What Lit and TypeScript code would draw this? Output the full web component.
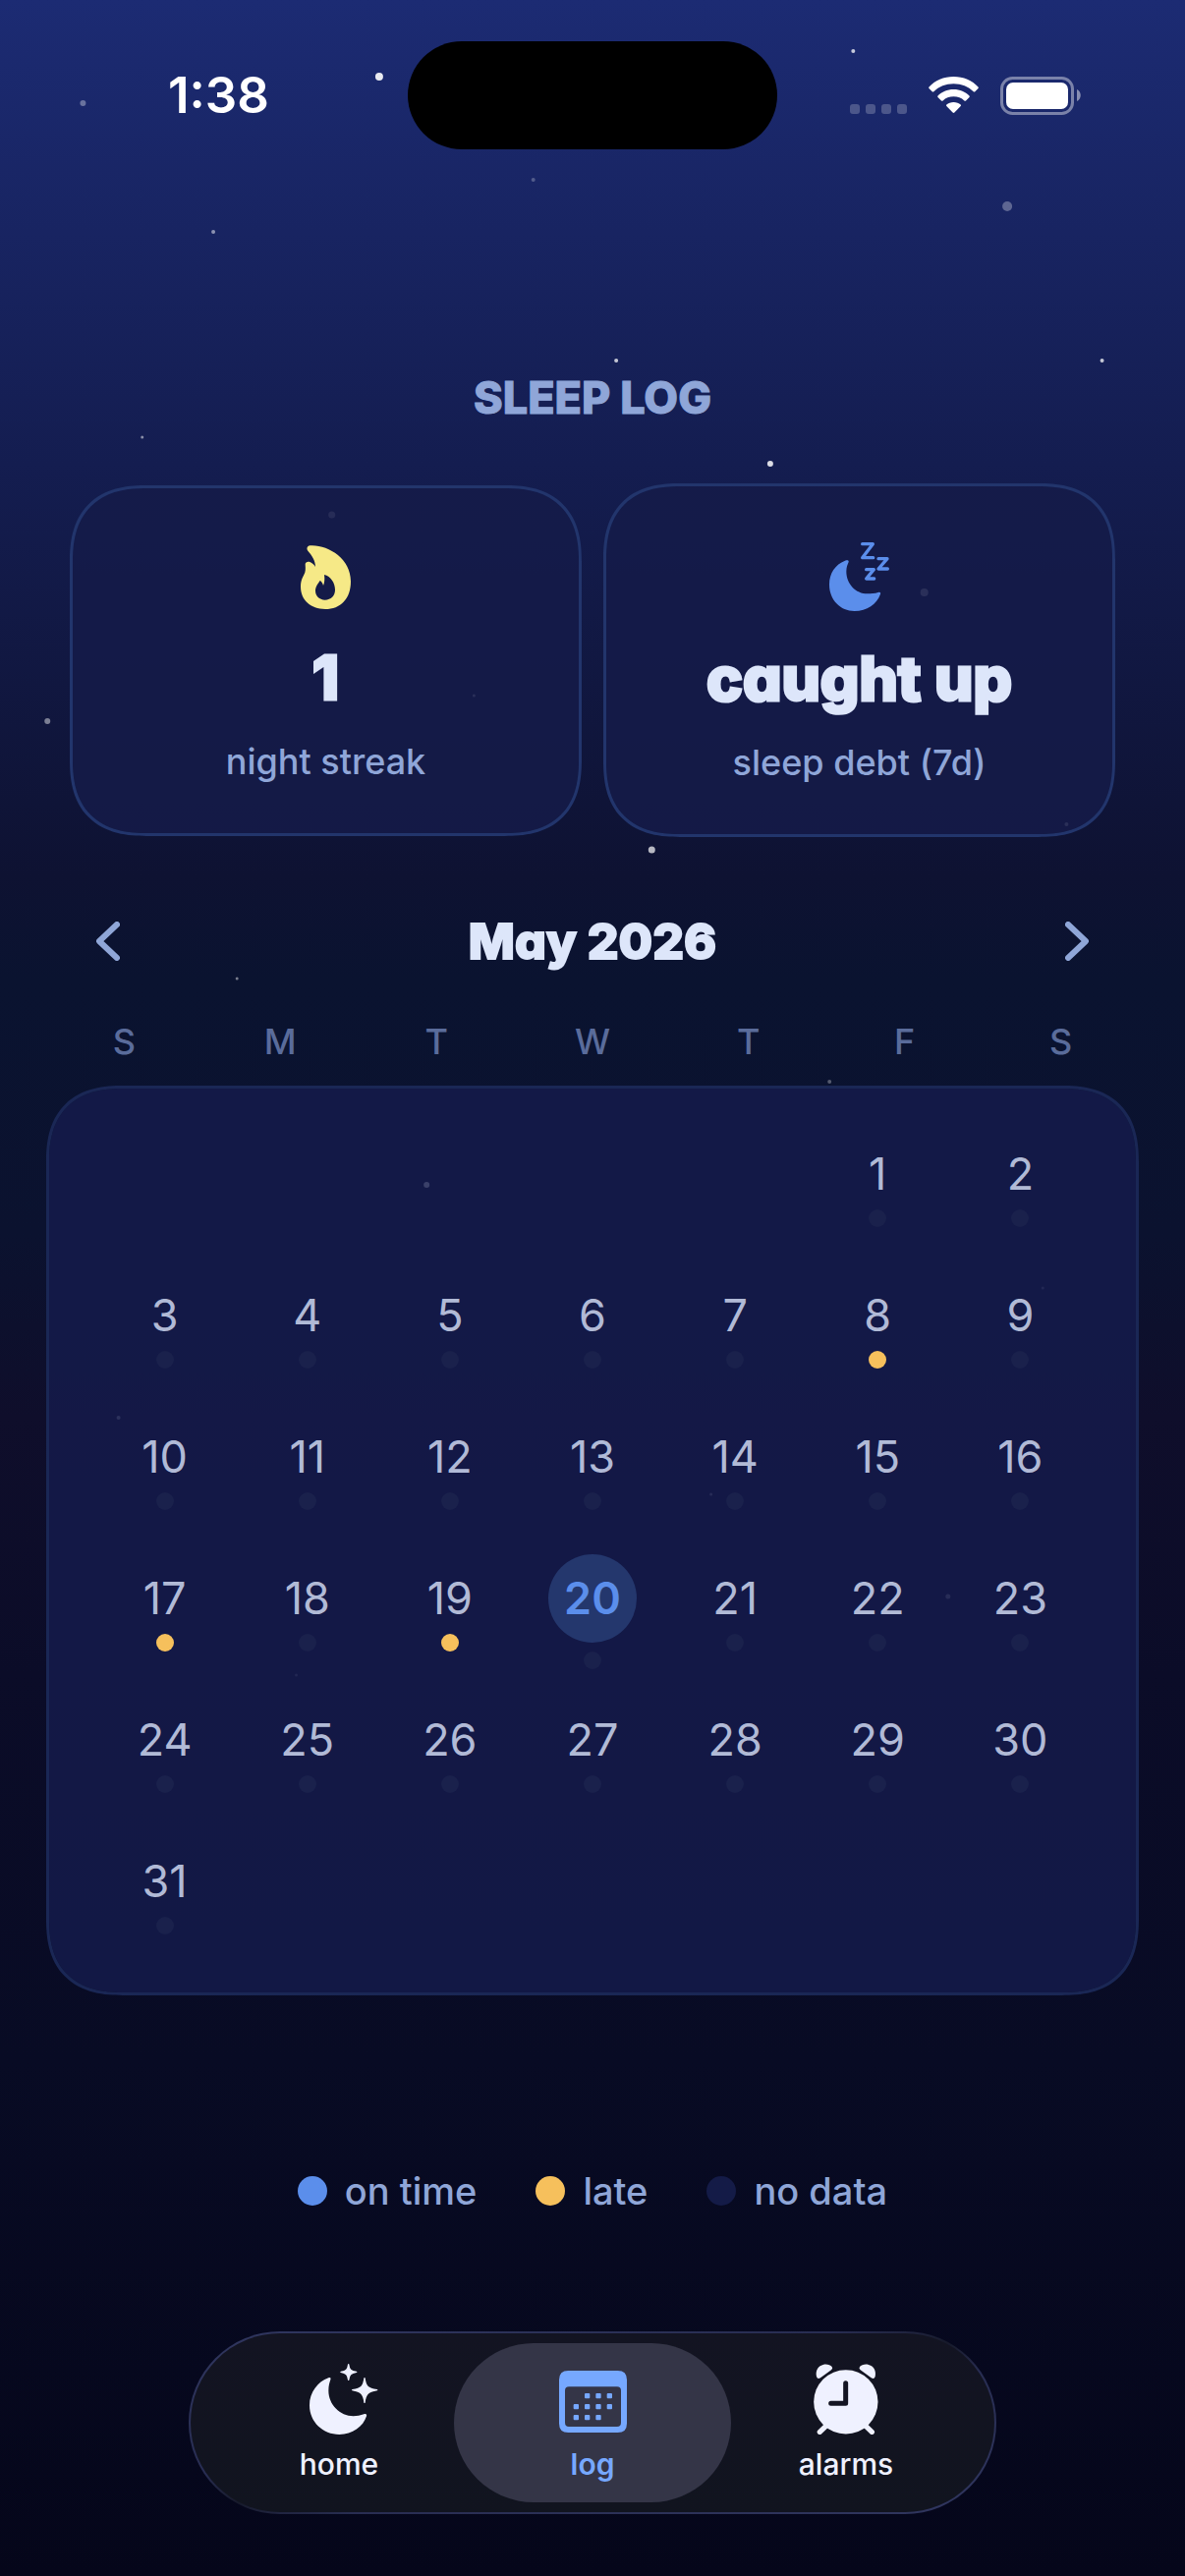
import { LitElement, html, css, svg } from "lit";
import { customElement, property, state } from "lit/decorators.js";
import { classMap } from "lit/directives/class-map.js";

type Status = "late" | "ontime" | "none";

/** x in percent of the width, y in pixels, radius, opacity */
const STARS: [number, number, number, number][] = [
  [7, 105, 3, 0.35],
  [32, 78, 4, 0.9],
  [45, 183, 2, 0.25],
  [18, 236, 2, 0.5],
  [12, 445, 1.5, 0.5],
  [72, 52, 2, 0.75],
  [85, 210, 5, 0.3],
  [52, 367, 2, 0.75],
  [93, 367, 2, 0.75],
  [65, 472, 3, 0.85],
  [28, 524, 3.5, 0.5],
  [40, 708, 1.5, 0.6],
  [4, 734, 3, 0.45],
  [78, 603, 4, 0.6],
  [90, 839, 2, 0.6],
  [55, 865, 3.5, 0.7],
  [20, 996, 1.5, 0.45],
  [36, 1206, 3, 0.8],
  [70, 1101, 2, 0.3],
  [88, 1311, 1.5, 0.3],
  [10, 1443, 2, 0.5],
  [60, 1521, 1.5, 0.4],
  [25, 1705, 1.5, 0.3],
  [80, 1625, 2.5, 0.4],
];

@customElement("star-field")
export class StarField extends LitElement {
  static styles = css`
    :host {
      position: absolute;
      inset: 0;
      pointer-events: none;
    }
    svg {
      width: 100%;
      height: 100%;
      display: block;
    }
  `;

  render() {
    return html`<svg aria-hidden="true">
      ${STARS.map(
        ([x, y, r, o]) =>
          svg`<circle cx="${x}%" cy=${y} r=${r} fill="#fff" fill-opacity=${o} />`
      )}
    </svg>`;
  }
}

@customElement("status-bar")
export class StatusBar extends LitElement {
  static styles = css`
    :host {
      display: grid;
      grid-template-columns: 1fr auto 1fr;
      align-items: center;
      padding-top: 42px;
    }
    .time {
      color: #fff;
      font-size: 51px;
      font-weight: 600;
      line-height: 60px;
      text-align: center;
      padding-left: 30px;
    }
    .island {
      width: 376px;
      height: 110px;
      border-radius: 55px;
      background: #000;
    }
    .icons {
      display: flex;
      align-items: center;
      gap: 22px;
      padding-left: 74px;
    }
    .cell {
      align-self: flex-end;
      display: flex;
      gap: 6px;
      padding-bottom: 1px;
    }
    .cell i {
      width: 10px;
      height: 10px;
      border-radius: 3px;
      background: rgba(255, 255, 255, 0.22);
    }
    svg {
      display: block;
    }
  `;

  render() {
    return html`
      <time class="time">1:38</time>
      <div class="island"></div>
      <div class="icons">
        <span class="cell"><i></i><i></i><i></i><i></i></span>
        <svg width="51" height="38" viewBox="0 0 51 38" fill="#fff" aria-hidden="true">
          <path d="M25.500 0C35.500 0 44.500 4 50.500 10.500Q51.200 11.300 50.500 12L47.300 15.200Q46.500 16 45.700 15.200C40.500 10.300 33.500 7.300 25.500 7.300S10.500 10.300 5.300 15.200Q4.500 16 3.700 15.200L.5 12Q-.2 11.300 .5 10.500C6.500 4 15.500 0 25.500 0Z" />
          <path d="M25.500 13C32 13 37.500 15.500 41.500 19.400Q42.200 20.200 41.500 21L38 24.400Q37.200 25.200 36.400 24.400C33.500 21.800 29.800 20.300 25.500 20.300S17.500 21.800 14.600 24.400Q13.800 25.200 13 24.400L9.500 21Q8.800 20.200 9.500 19.400C13.500 15.500 19 13 25.500 13Z" />
          <path d="M25.500 26C28.400 26 30.800 26.900 32.700 28.500Q33.400 29.200 32.700 30L26.400 36.500Q25.500 37.400 24.600 36.500L18.300 30Q17.600 29.200 18.300 28.500C20.200 26.900 22.600 26 25.500 26Z" />
        </svg>
        <svg width="82" height="39" viewBox="0 0 82 39" aria-hidden="true">
          <rect x="1.500" y="1.500" width="72" height="36" rx="11" fill="none" stroke="#fff" stroke-opacity=".42" stroke-width="3" />
          <rect x="6" y="6" width="63" height="27" rx="7" fill="#fff" />
          <path d="M78 13C83 15 83 23 78 25Z" fill="#fff" fill-opacity=".48" />
        </svg>
      </div>
    `;
  }
}

@customElement("stat-card")
export class StatCard extends LitElement {
  @property() value = "";
  @property() label = "";

  static styles = css`
    :host {
      flex: 1;
      box-sizing: border-box;
      display: flex;
      flex-direction: column;
      align-items: center;
      padding: 57px 24px 51px;
      border: 3px solid #22356c;
      border-radius: 62px;
      background: rgba(21, 27, 73, 0.85);
      background-clip: padding-box;
    }
    @supports (corner-shape: superellipse(1.3)) {
      :host {
        border-radius: 78px;
        corner-shape: superellipse(1.3);
      }
    }
    .value {
      margin-top: 33px;
      color: #dde6fa;
      font-size: 62px;
      font-weight: 800;
      line-height: 72px;
      font-feature-settings: "cv11";
      -webkit-text-stroke: 3px #dde6fa;
      stroke-linejoin: round;
    }
    .label {
      margin-top: 27px;
      color: #8fa6d8;
      font-size: 36px;
      font-weight: 500;
      line-height: 44px;
    }
  `;

  render() {
    return html`
      <slot></slot>
      <div class="value">${this.value}</div>
      <div class="label">${this.label}</div>
    `;
  }
}

@customElement("month-calendar")
export class MonthCalendar extends LitElement {
  @property({ type: Number }) days = 31;
  @property({ type: Number }) offset = 5;
  @property({ type: Number }) today = 20;
  @property({ attribute: false }) marks: Record<number, Status> = {};

  static styles = css`
    .weekdays {
      display: grid;
      grid-template-columns: repeat(7, 1fr);
      color: #5a6c9b;
      font-size: 36px;
      font-weight: 500;
      line-height: 40px;
      text-align: center;
    }
    .days {
      margin-top: 25px;
      display: grid;
      grid-template-columns: repeat(7, 1fr);
      grid-auto-rows: 132px;
      row-gap: 12px;
      padding: 34px 45px;
      border: 3px solid #1a2755;
      border-radius: 62px;
      background: rgba(21, 28, 78, 0.8);
      background-clip: padding-box;
    }
    @supports (corner-shape: superellipse(1.3)) {
      .days {
        border-radius: 78px;
        corner-shape: superellipse(1.3);
      }
    }
    .day {
      display: flex;
      flex-direction: column;
      align-items: center;
      justify-content: center;
      gap: 9px;
      padding: 0;
      border: 0;
      background: none;
      font: inherit;
      color: #b1bad6;
    }
    .num {
      font-size: 45px;
      line-height: 54px;
    }
    .today .num {
      width: 90px;
      line-height: 90px;
      border-radius: 50%;
      background: #24376d;
      color: #5b8eeb;
      font-weight: 600;
    }
    .dot {
      width: 18px;
      height: 18px;
      border-radius: 50%;
      background: #1a214c;
    }
    .dot.late {
      background: #f6c05c;
    }
    .dot.ontime {
      background: #5b8eeb;
    }
  `;

  render() {
    const days = Array.from({ length: this.days }, (_, i) => i + 1);
    return html`
      <div class="weekdays">
        ${["S", "M", "T", "W", "T", "F", "S"].map((d) => html`<span>${d}</span>`)}
      </div>
      <div class="days">
        ${Array.from({ length: this.offset }, () => html`<span></span>`)}
        ${days.map((d) => {
          const mark = this.marks[d] ?? "none";
          return html`<button class=${classMap({ day: true, today: d === this.today })}>
            <span class="num">${d}</span>
            <span class=${classMap({ dot: true, [mark]: true })}></span>
          </button>`;
        })}
      </div>
    `;
  }
}

@customElement("tab-bar")
export class TabBar extends LitElement {
  @state() private active = "log";

  static styles = css`
    :host {
      align-self: center;
      display: block;
    }
    nav {
      display: grid;
      grid-template-columns: repeat(3, 258px);
      padding: 10px 22px;
      border: 2px solid transparent;
      border-radius: 93px;
      background:
        linear-gradient(#131422, #11141f) padding-box,
        linear-gradient(
            to bottom right,
            #30365f 0%,
            #282d52 40%,
            #171a2b 50%,
            #282d52 60%,
            #30365f 100%
          )
          border-box;
    }
    button {
      height: 162px;
      margin: 0 -12px;
      display: flex;
      flex-direction: column;
      align-items: center;
      padding: 21px 0 0;
      border: 0;
      border-radius: 81px;
      background: none;
      color: #eff1ff;
      font: inherit;
      font-size: 30px;
      font-weight: 500;
      line-height: 36px;
      cursor: pointer;
    }
    .active {
      background: #343547;
      color: #76a8ff;
      font-weight: 600;
    }
    .icon {
      height: 72px;
      display: flex;
      align-items: center;
      margin-bottom: 12px;
    }
    svg {
      display: block;
    }
  `;

  private icons = {
    home: html`<svg width="79" height="72" viewBox="377 138 237 216" fill="currentColor" aria-hidden="true">
      <path d="M462 181C430 192 404 225 404 265C404 316 445 354 495 354C535 354 568 330 578 298C580 292 575 290 570 292C560 296 548 298 538 298C497 298 462 263 462 220C462 205 465 195 468 187C470 181 467 179 462 181Z" />
      <g stroke="currentColor" stroke-width="4" stroke-linejoin="round">
        <path d="M523 140C525 156 530 161 547 163C530 166 525 171 523 187C521 171 516 166 500 163C516 161 521 156 523 140Z" />
        <path d="M572 182C575 206 581 214 610 218C581 223 575 231 572 256C569 231 563 223 535 218C563 214 569 206 572 182Z" />
      </g>
    </svg>`,
    log: html`<svg width="69" height="67" viewBox="0 -12 207 201" fill="currentColor" aria-hidden="true">
      <path fill-rule="evenodd" d="M28 0H179Q207 0 207 28V161Q207 189 179 189H28Q0 189 0 161V28Q0 0 28 0ZM30 49Q18 49 18 61V158Q18 171 30 171H177Q189 171 189 158V61Q189 49 177 49Z" />
      ${[
        [78, 69], [112, 69], [146, 69],
        [44, 102], [78, 102], [112, 102], [146, 102],
        [44, 135], [78, 135], [112, 135],
      ].map(([x, y]) => svg`<rect x=${x} y=${y} width="16" height="16" rx="3" />`)}
    </svg>`,
    alarms: html`<svg width="66" height="72" viewBox="743 138 198 216" fill="currentColor" aria-hidden="true">
      <circle cx="841.500" cy="254.500" r="98" />
      <path d="M752 177C748 158 757 144 774 140C784 138 795 142 799 147Q803 153 797 157L764 181Q755 187 752 177Z" />
      <path d="M931 177C935 158 926 144 909 140C899 138 888 142 884 147Q880 153 886 157L919 181Q928 187 931 177Z" />
      <path d="M780 329L762 346M903 329L921 346" stroke="currentColor" stroke-width="16" stroke-linecap="round" />
      <path d="M841 197V259H796" fill="none" stroke="#131422" stroke-width="15" stroke-linecap="round" stroke-linejoin="round" />
    </svg>`,
  };

  render() {
    return html`<nav>
      ${(["home", "log", "alarms"] as const).map(
        (name) => html`<button
          class=${classMap({ active: this.active === name })}
          @click=${() => (this.active = name)}
        >
          <span class="icon">${this.icons[name]}</span>
          <span>${name}</span>
        </button>`
      )}
    </nav>`;
  }
}

@customElement("app-root")
export class AppRoot extends LitElement {
  static styles = css`
    :host {
      display: flex;
      flex-direction: column;
      position: relative;
      min-height: 100vh;
      box-sizing: border-box;
      padding-bottom: 63px;
      font-family: Inter, "Noto Sans", sans-serif;
      background: linear-gradient(
        #1c2b73 0%,
        #141d50 18%,
        #0e1232 34%,
        #0a1330 38%,
        #0b122f 48%,
        #0f0e2b 55%,
        #0b0c28 65%,
        #080b24 80%,
        #05061a 100%
      );
    }
    main {
      position: relative;
      display: flex;
      flex-direction: column;
    }
    h1 {
      margin: 223px 0 0;
      color: #8fa6d8;
      font-size: 45px;
      font-weight: 800;
      line-height: 60px;
      text-align: center;
      -webkit-text-stroke: 1px #8fa6d8;
    }
    .stats {
      display: flex;
      align-items: center;
      gap: 22px;
      margin-top: 57px;
      padding: 0 71px;
    }
    .stats svg {
      display: block;
    }
    .month {
      display: flex;
      align-items: center;
      justify-content: space-between;
      margin-top: 76px;
      padding: 0 80px;
    }
    .month button {
      width: 60px;
      height: 60px;
      display: grid;
      place-items: center;
      padding: 0;
      border: 0;
      background: none;
      cursor: pointer;
    }
    h2 {
      margin: 0;
      color: #dde6fa;
      font-size: 50px;
      font-weight: 800;
      line-height: 60px;
      font-feature-settings: "cv11";
      -webkit-text-stroke: 2px #dde6fa;
    }
    month-calendar {
      margin: 52px 47px 0;
    }
    .legend {
      display: flex;
      justify-content: center;
      gap: 60px;
      margin-top: 177px;
      color: #8fa6d8;
      font-size: 38px;
      font-weight: 500;
      line-height: 44px;
    }
    .legend span {
      display: flex;
      align-items: center;
      gap: 18px;
    }
    .legend i {
      width: 30px;
      height: 30px;
      border-radius: 50%;
      background: #141b47;
    }
    .legend .ontime {
      background: #5b8eeb;
    }
    .legend .late {
      background: #f6c05c;
    }
    tab-bar {
      position: relative;
      margin-top: auto;
    }
  `;

  render() {
    return html`
      <star-field></star-field>
      <main>
        <status-bar></status-bar>
        <h1>SLEEP LOG</h1>
        <section class="stats">
          <stat-card value="1" label="night streak">
            <svg width="51" height="67" viewBox="48 42 153 201" fill="#f6e987" aria-hidden="true">
              <path fill-rule="evenodd" d="M76 46C130 42 201 85 201 155C201 208 170 240 123 240C78 240 48 212 48 172C48 150 56 140 61 128C64 118 62 110 62 103C62 96 70 94 76 96C84 99 90 105 93 111C93 92 82 75 70 62C65 56 68 47 76 46ZM120 135C122 148 121 160 117 168C115 161 112 156 107 153C102 162 93 170 93 184C93 200 105 212 122 212C141 212 153 200 153 181C153 160 140 140 120 135Z" />
            </svg>
          </stat-card>
          <stat-card value="caught up" label="sleep debt (7d)">
            <svg width="61" height="70" viewBox="30 36 183 210" aria-hidden="true">
              <path fill="#5b8eeb" d="M78 92C48 104 30 130 30 165C30 212 64 246 107 246C145 246 175 225 186 194C188 189 184 187 179 189C170 192 155 193 147 193C110 193 82 162 82 125C82 112 86 103 89 96C90 91 86 89 78 92Z" />
              <path d="M131 41H163L131 83H164M180 86H207L180 117H208M143 119H166L143 147H167" fill="none" stroke="#5b8eeb" stroke-width="10" stroke-linecap="round" stroke-linejoin="round" />
            </svg>
          </stat-card>
        </section>
        <header class="month">
          <button aria-label="Previous month">
            <svg width="24" height="40" viewBox="0 0 24 40" fill="none" stroke="#8fa6d8" stroke-width="6" stroke-linecap="round" stroke-linejoin="round"><path d="M21 3L3 20L21 37" /></svg>
          </button>
          <h2>May 2026</h2>
          <button aria-label="Next month">
            <svg width="24" height="40" viewBox="0 0 24 40" fill="none" stroke="#8fa6d8" stroke-width="6" stroke-linecap="round" stroke-linejoin="round"><path d="M3 3L21 20L3 37" /></svg>
          </button>
        </header>
        <month-calendar .marks=${{ 8: "late", 17: "late", 19: "late" }}></month-calendar>
        <div class="legend">
          <span><i class="ontime"></i>on time</span>
          <span><i class="late"></i>late</span>
          <span><i></i>no data</span>
        </div>
      </main>
      <tab-bar></tab-bar>
    `;
  }
}
